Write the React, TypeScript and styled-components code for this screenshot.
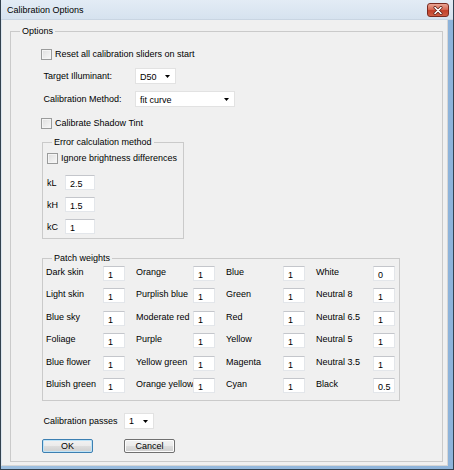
import React from "react";
import styled, { createGlobalStyle } from "styled-components";

const GlobalStyle = createGlobalStyle`
  html, body { margin: 0; padding: 0; background: #f0f0f0; }
  body {
    font-family: "Liberation Sans", Arial, sans-serif;
    font-size: 9px;
    color: #000;
  }
  * { box-sizing: border-box; }
`;

const Window = styled.div`
  width: 454px;
  height: 470px;
  display: flex;
  flex-direction: column;
  background: linear-gradient(90deg, #9dbfe0, #8db3da);
  border-left: 1px solid #32414f;
  border-right: 1px solid #32414f;
  border-bottom: 1px solid #32414f;
`;

const TitleBar = styled.div`
  height: 20px;
  flex: none;
  display: flex;
  align-items: center;
  padding: 0 4px 0 6px;
  background: linear-gradient(#e3ecf5, #d6e2ef);
  border-bottom: 1px solid #c9d5e2;
`;

const Title = styled.span`
  font-size: 9px;
  color: #000;
  flex: 1;
`;

const CloseButton = styled.div`
  width: 22px;
  height: 14px;
  border: 1px solid #7a2a20;
  border-radius: 3px;
  background: linear-gradient(#e9a594 0%, #d86b56 45%, #c2402a 55%, #cf5e44 100%);
  display: flex;
  align-items: center;
  justify-content: center;
  margin-top: 1px;
`;

const Client = styled.div`
  flex: 1;
  display: flex;
  flex-direction: column;
  background: #f0f0f0;
  margin: 0 5px 3px 0;
  border-left: 1px solid #dce6f0;
  border-right: 1px solid #d6d6d6;
  border-bottom: 1px solid #d6d6d6;
`;

const GroupBox = styled.fieldset<{ $w?: number; $mt?: number; $ml?: number }>`
  margin: ${(p) => p.$mt ?? 0}px 0 0 ${(p) => p.$ml ?? 0}px;
  padding: 0;
  min-width: 0;
  border: 1px solid #cacaca;
  ${(p) => (p.$w ? `width: ${p.$w}px;` : "")}
`;

const OptionsBox = styled(GroupBox)`
  flex: 1;
  margin: 5px 4px 3px 8px;
`;

const Legend = styled.legend`
  margin-left: 9px;
  padding: 0 2px;
  line-height: 12px;
  font-size: 9px;
`;

const OptionsBody = styled.div`
  display: flex;
  flex-direction: column;
  align-items: flex-start;
  padding: 11px 0 0 30px;
`;

const CheckRow = styled.label<{ $mt?: number }>`
  display: flex;
  align-items: center;
  gap: 3px;
  height: 12px;
  margin-top: ${(p) => p.$mt ?? 0}px;
`;

const CheckBox = styled.span`
  width: 11px;
  height: 11px;
  border: 1px solid #9a9b9b;
  background: linear-gradient(135deg, #dedede, #f8f8f8);
  box-shadow: inset 0 0 0 1px #f4f4f4;
  flex: none;
`;

const FieldRow = styled.div<{ $mt?: number }>`
  display: flex;
  align-items: center;
  margin-top: ${(p) => p.$mt ?? 0}px;
`;

const Label = styled.span<{ $w: number }>`
  width: ${(p) => p.$w}px;
  flex: none;
  white-space: nowrap;
`;

const Select = styled.div<{ $w: number }>`
  width: ${(p) => p.$w}px;
  height: 16px;
  background: #fff;
  border: 1px solid #e2e2e2;
  display: flex;
  align-items: center;
  justify-content: space-between;
  padding: 1px 5px 0 4px;
`;

const TextBox = styled.div<{ $w: number }>`
  width: ${(p) => p.$w}px;
  height: 15px;
  background: #fff;
  border: 1px solid #e3e6ea;
  border-top-color: #c4c6cb;
  padding: 3px 0 0 4px;
  line-height: 10px;
  flex: none;
`;

const ErrorBody = styled.div`
  display: flex;
  flex-direction: column;
  padding: 4px 0 4px 4px;
`;

const PatchGrid = styled.div`
  display: grid;
  grid-template-columns: repeat(4, 90px);
  grid-auto-rows: 15px;
  row-gap: 7.4px;
  padding: 2px 0 7px 3px;
`;

const PatchCell = styled.div`
  display: flex;
  align-items: flex-start;
`;

const PatchLabel = styled(Label)`
  line-height: 12px;
`;

const ButtonRow = styled.div`
  display: flex;
  gap: 31px;
  margin: 10px 0 0 1px;
`;

const Button = styled.div<{ $default?: boolean }>`
  width: 51px;
  height: 14px;
  border: 1px solid ${(p) => (p.$default ? "#3c7fb1" : "#707070")};
  border-radius: 2px;
  background: linear-gradient(#f2f2f2 0%, #ebebeb 48%, #dddddd 52%, #cfcfcf 100%);
  box-shadow: ${(p) => (p.$default ? "inset 0 0 0 1px #bfe4f8" : "inset 0 0 0 1px #fcfcfc")};
  display: flex;
  align-items: center;
  justify-content: center;
  line-height: 10px;
`;

const Arrow = () => (
  <svg width="5" height="3" viewBox="0 0 5 3">
    <path d="M0 0 H5 L2.5 3 Z" fill="#000" />
  </svg>
);

const patches: [string, string][][] = [
  [["Dark skin", "1"], ["Orange", "1"], ["Blue", "1"], ["White", "0"]],
  [["Light skin", "1"], ["Purplish blue", "1"], ["Green", "1"], ["Neutral 8", "1"]],
  [["Blue sky", "1"], ["Moderate red", "1"], ["Red", "1"], ["Neutral 6.5", "1"]],
  [["Foliage", "1"], ["Purple", "1"], ["Yellow", "1"], ["Neutral 5", "1"]],
  [["Blue flower", "1"], ["Yellow green", "1"], ["Magenta", "1"], ["Neutral 3.5", "1"]],
  [["Bluish green", "1"], ["Orange yellow", "1"], ["Cyan", "1"], ["Black", "0.5"]],
];

export default function App() {
  return (
    <>
      <GlobalStyle />
      <Window>
        <TitleBar>
          <Title>Calibration Options</Title>
          <CloseButton>
            <svg width="10" height="9" viewBox="0 0 10 9">
              <path d="M2 1.5 L8 7.5 M8 1.5 L2 7.5" stroke="#5a1d15" strokeWidth="3" strokeLinecap="round" />
              <path d="M2 1.5 L8 7.5 M8 1.5 L2 7.5" stroke="#fff" strokeWidth="1.6" strokeLinecap="round" />
            </svg>
          </CloseButton>
        </TitleBar>
        <Client>
          <OptionsBox>
            <Legend>Options</Legend>
            <OptionsBody>
              <CheckRow>
                <CheckBox />
                <span>Reset all calibration sliders on start</span>
              </CheckRow>
              <FieldRow $mt={8}>
                <Label $w={94}>&nbsp;Target Illuminant:</Label>
                <Select $w={41}>
                  <span>D50</span>
                  <Arrow />
                </Select>
              </FieldRow>
              <FieldRow $mt={7}>
                <Label $w={94}>&nbsp;Calibration Method:</Label>
                <Select $w={100}>
                  <span>fit curve</span>
                  <Arrow />
                </Select>
              </FieldRow>
              <CheckRow $mt={10}>
                <CheckBox />
                <span>Calibrate Shadow Tint</span>
              </CheckRow>
              <GroupBox $w={142} $mt={7} $ml={1}>
                <Legend>Error calculation method</Legend>
                <ErrorBody>
                  <CheckRow>
                    <CheckBox />
                    <span>Ignore brightness differences</span>
                  </CheckRow>
                  <FieldRow $mt={11}>
                    <Label $w={18}>kL</Label>
                    <TextBox $w={30}>2.5</TextBox>
                  </FieldRow>
                  <FieldRow $mt={7}>
                    <Label $w={18}>kH</Label>
                    <TextBox $w={30}>1.5</TextBox>
                  </FieldRow>
                  <FieldRow $mt={7}>
                    <Label $w={18}>kC</Label>
                    <TextBox $w={30}>1</TextBox>
                  </FieldRow>
                </ErrorBody>
              </GroupBox>
              <GroupBox $w={358} $mt={13} $ml={1}>
                <Legend>Patch weights</Legend>
                <PatchGrid>
                  {patches.flat().map(([name, val]) => (
                    <PatchCell key={name}>
                      <PatchLabel $w={57}>{name}</PatchLabel>
                      <TextBox $w={22}>{val}</TextBox>
                    </PatchCell>
                  ))}
                </PatchGrid>
              </GroupBox>
              <FieldRow $mt={12}>
                <Label $w={83}>&nbsp;Calibration passes</Label>
                <Select $w={30}>
                  <span>1</span>
                  <Arrow />
                </Select>
              </FieldRow>
              <ButtonRow>
                <Button $default>OK</Button>
                <Button>Cancel</Button>
              </ButtonRow>
            </OptionsBody>
          </OptionsBox>
        </Client>
      </Window>
    </>
  );
}
